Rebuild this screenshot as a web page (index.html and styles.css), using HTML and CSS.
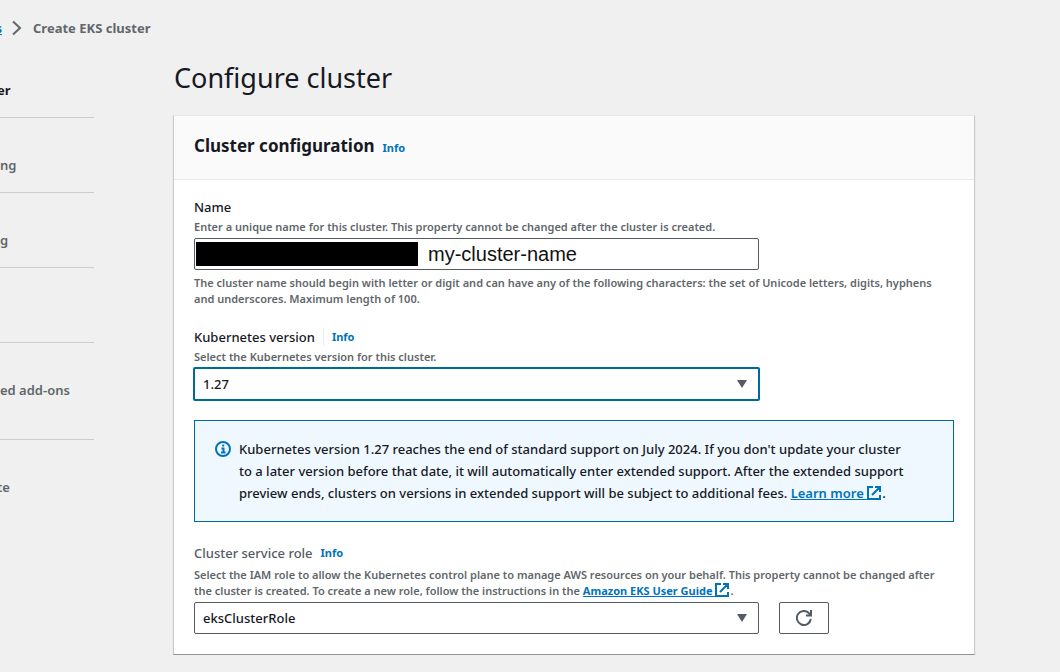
FILE: index.html
```
<!DOCTYPE html>
<html lang="en">
<head>
<meta charset="utf-8">
<title>Create EKS cluster</title>
<link rel="stylesheet" href="styles.css">
</head>
<body>
<nav class="breadcrumbs" aria-label="Breadcrumbs">
  <a class="crumb-link" href="#">s</a>
  <svg class="chevron" viewBox="0 0 10 16" aria-hidden="true"><path d="M1 1.500l7 6.500-7 6.500"/></svg>
  <span class="crumb-current">Create EKS cluster</span>
</nav>
<div class="layout">
  <aside>
    <ol class="steps">
      <li class="step current">er</li>
      <li class="step">ng</li>
      <li class="step">g</li>
      <li class="step"></li>
      <li class="step tall">ed add-ons</li>
      <li class="step last">te</li>
    </ol>
  </aside>
  <main>
    <h1>Configure cluster</h1>
    <section class="card">
      <header class="card-header">
        <h2>Cluster configuration</h2>
        <a class="info" href="#">Info</a>
      </header>
      <div class="card-body">
        <div class="field">
          <div class="label-row"><label for="name">Name</label></div>
          <p class="hint">Enter a unique name for this cluster. This property cannot be changed after the cluster is created.</p>
          <div class="text-box control">
            <span class="mask"></span>
            <input id="name" type="text" value="my-cluster-name">
          </div>
          <p class="hint constraint">The cluster name should begin with letter or digit and can have any of the following characters: the set of Unicode letters, digits, hyphens<br>and underscores. Maximum length of 100.</p>
        </div>
        <div class="field">
          <div class="label-row"><label class="divided" for="version">Kubernetes version</label><a class="info" href="#">Info</a></div>
          <p class="hint">Select the Kubernetes version for this cluster.</p>
          <div class="select-box focused control">
            <select id="version"><option>1.27</option></select>
            <svg class="caret" viewBox="0 0 10 8" aria-hidden="true"><path d="M0 0h10L5 8z"/></svg>
          </div>
        </div>
        <div class="alert">
          <svg class="info-icon" viewBox="0 0 16 16" aria-hidden="true"><circle cx="8" cy="8" r="7"/><path d="M6.500 7.500H8.500V11M6 11.500h4.500M7.200 4.500h2"/></svg>
          <p>Kubernetes version 1.27 reaches the end of standard support on July 2024. If you don't update your cluster<br>to a later version before that date, it will automatically enter extended support. After the extended support<br>preview ends, clusters on versions in extended support will be subject to additional fees. <a href="#">Learn more <svg class="external" viewBox="0 0 14 14" aria-hidden="true"><path d="M6 1H1v12h12V9M8 1h5v5M13 1L5 9"/></svg></a>.</p>
        </div>
        <div class="field">
          <div class="label-row"><label class="muted" for="role">Cluster service role</label><a class="info" href="#">Info</a></div>
          <p class="hint role-hint">Select the IAM role to allow the Kubernetes control plane to manage AWS resources on your behalf. This property cannot be changed after<br>the cluster is created. To create a new role, follow the instructions in the <a href="#">Amazon EKS User Guide <svg class="external" viewBox="0 0 14 14" aria-hidden="true"><path d="M6 1H1v12h12V9M8 1h5v5M13 1L5 9"/></svg></a>.</p>
          <div class="role-row">
            <div class="select-box control">
              <select id="role"><option>eksClusterRole</option></select>
              <svg class="caret" viewBox="0 0 10 8" aria-hidden="true"><path d="M0 0h10L5 8z"/></svg>
            </div>
            <button class="refresh" type="button" aria-label="Refresh roles">
              <svg viewBox="0 0 16 16" aria-hidden="true"><path d="M14.800 9A7 7 0 1 1 13 3.200L15 5M10 5.500h5V0"/></svg>
            </button>
          </div>
        </div>
      </div>
    </section>
  </main>
</div>
</body>
</html>
```
FILE: styles.css
```
* { box-sizing: border-box; }
body {
  margin: 0;
  background: #f0f0f0;
  color: #16191f;
  font: 500 13px/22px "Noto Sans", "Open Sans", sans-serif;
  overflow-x: hidden;
}
h1, h2, p, ol { margin: 0; padding: 0; }
a { color: #0073bb; }
svg { fill: none; stroke: currentColor; }

.breadcrumbs { display: flex; align-items: center; height: 56px; color: #5f676b; font-weight: 700; }
.crumb-link { display: flex; justify-content: flex-end; width: 2px; overflow: hidden; }
.chevron { width: 10px; height: 16px; margin: 0 11px 0 10px; stroke-width: 2; }

.layout { display: grid; grid-template-columns: 94px minmax(0, 1fr); column-gap: 79px; padding-right: 85px; }
.steps { list-style: none; padding-top: 12px; color: #5f676b; font-weight: 600; }
.step { height: 75px; padding-top: 36px; border-bottom: 1px solid #c9cfcf; white-space: nowrap; }
.step.current { height: 50px; padding-top: 11px; color: #16191f; font-weight: 700; }
.step.tall { height: 97px; }
.step.last { border: 0; }
.step.current, .step.last { text-indent: -3px; }

h1 { font-size: 27px; line-height: 36px; font-weight: 400; padding: 4px 1px 19px; }
.card { background: #fff; border: 1px solid #c8cccc; border-top-color: #e7e9e9; border-bottom-color: #8f9494; box-shadow: 0 1px 1px #c9cccc; }
.card-header { display: flex; align-items: baseline; gap: 8px; height: 64px; padding: 19px 20px; background: #fafafa; border-bottom: 1px solid #e7eaea; }
h2 { font-size: 17px; line-height: 22px; font-weight: 700; }
.info { font-size: 11px; font-weight: 700; text-decoration: none; }
.card-body { display: flex; flex-direction: column; gap: 19px; padding: 16px 20px 20px; }

.label-row { display: flex; align-items: center; gap: 8px; height: 22px; }
.divided { padding-right: 8px; line-height: 18px; border-right: 1px solid #eaeded; }
.muted { color: #545b64; }
.hint { margin-top: 1px; color: #5f676b; font-size: 11px; font-weight: 600; line-height: 16px; white-space: nowrap; }
.hint a { font-weight: 700; }
.control { display: flex; align-items: center; width: 565px; height: 32px; margin-top: 3px; border: 1px solid #545b64; border-radius: 2px; background: #fff; }
.constraint { margin-top: 5px; }
.role-hint { margin-top: 3px; }
.mask { width: 222px; height: 24px; margin: 0 10px 0 1px; background: #000; }
.text-box input { flex: 1; min-width: 0; padding: 0; border: 0; outline: 0; color: #111; background: none; font: 20px "Liberation Sans", Arial, sans-serif; }
.select-box { display: grid; }
.select-box > * { grid-area: 1 / 1; }
.select-box select { appearance: none; width: 100%; height: 100%; padding: 0 32px 0 8px; border: 0; outline: 0; background: none; color: #16191f; font: inherit; }
.focused { width: 567px; height: 34px; margin: 2px -1px 0; border: 2px solid #00699c; }
.caret { justify-self: end; width: 12px; height: 8px; margin-right: 10px; fill: #545b64; stroke: none; pointer-events: none; }

.alert { display: flex; gap: 8px; min-height: 102px; margin-bottom: 1px; padding: 17px 19px; border: 1px solid #006b9e; background: #f0f8ff; white-space: nowrap; }
.info-icon { flex: none; width: 16px; height: 16px; margin: 3px 0 0 1px; color: #0073bb; stroke-width: 2; }
.alert a { font-weight: 600; }
.external { width: 14px; height: 14px; margin-right: 1px; vertical-align: -2px; stroke-width: 2; }
.role-row { display: flex; gap: 20px; }
.refresh { display: grid; place-items: center; width: 50px; height: 32px; margin-top: 3px; padding: 0; border: 1px solid #545b64; border-radius: 2px; background: #fff; color: #545b64; }
.refresh svg { width: 16px; height: 16px; stroke-width: 2; }
```
